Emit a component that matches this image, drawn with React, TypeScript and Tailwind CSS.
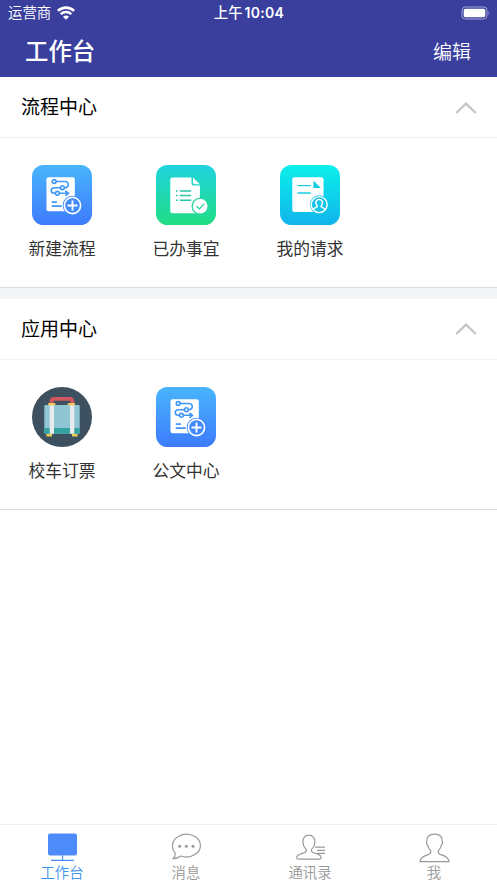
import type { ReactNode } from "react";

interface Entry {
  label: string;
  icon: ReactNode;
}

function FlowIcon({ id }: { id: string }) {
  return (
    <svg viewBox="0 0 60 60" className="size-[60px]" fill="none">
      <defs>
        <linearGradient id={id} x1="0" y1="0" x2="0" y2="1">
          <stop offset="0" stopColor="#49b5fd" />
          <stop offset="1" stopColor="#3d7bfc" />
        </linearGradient>
      </defs>
      <rect width="60" height="60" rx="11.5" fill={`url(#${id})`} />
      <rect x="14.5" y="12.2" width="28.3" height="34" rx="2" fill="#fff" />
      <g stroke="#3f97f8" strokeWidth="1.6">
        <path d="M24 16.5h8.5c5 0 5 6.2 0 6.2M28.4 22.7h-6c-4.2 0-4.2 5.6 0 5.6h1.2M27.3 28.3h8.4M33.3 25.8l3.2 2.5-3.2 2.5" />
        <circle cx="22.2" cy="16.5" r="1.9" />
        <circle cx="30.4" cy="22.7" r="1.9" />
        <circle cx="25.4" cy="28.3" r="1.9" />
        <path d="M19.7 37.2h5.2M19.7 41.2h10" strokeWidth="1.7" />
      </g>
      <circle cx="40.5" cy="40.5" r="9.8" fill="#408afc" />
      <circle cx="40.5" cy="40.5" r="8.1" stroke="#fff" strokeWidth="1.7" />
      <path d="M35.5 40.5h10M40.5 35.5v10" stroke="#fff" strokeWidth="1.9" />
    </svg>
  );
}

function DoneIcon() {
  return (
    <svg viewBox="0 0 60 60" className="size-[60px]" fill="none">
      <defs>
        <linearGradient id="done" x1="0" y1="0" x2="0" y2="1">
          <stop offset="0" stopColor="#20d3df" />
          <stop offset="1" stopColor="#20dd83" />
        </linearGradient>
      </defs>
      <rect width="60" height="60" rx="11.5" fill="url(#done)" />
      <path d="M16.3 12.4h19.2v6.1q0 2.1 2.1 2.1h6.3v25.6q0 2-2 2H16.3q-2 0-2-2V14.4q0-2 2-2Z" fill="#fff" />
      <path d="M37 12.6l6.8 6.6h-4.9q-1.9 0-1.9-1.9Z" fill="#fff" />
      <g stroke="#24c8a5" strokeWidth="1.5">
        <path d="M20 26h1.6M23.8 26h11.4M20 30.6h1.6M23.8 30.6h11.4M20 35.3h1.6M23.8 35.3h11.4" />
      </g>
      <circle cx="44.2" cy="41.2" r="8" fill="#fff" stroke="#25d6a0" strokeWidth="1.3" />
      <path d="M40.5 41.2l2.9 2.7 4.8-5" stroke="#24cf9a" strokeWidth="1.2" />
    </svg>
  );
}

function RequestIcon() {
  return (
    <svg viewBox="0 0 60 60" className="size-[60px]" fill="none">
      <defs>
        <linearGradient id="request" x1="0" y1="0" x2="0" y2="1">
          <stop offset="0" stopColor="#0bf0eb" />
          <stop offset="1" stopColor="#11b4eb" />
        </linearGradient>
      </defs>
      <rect width="60" height="60" rx="11.5" fill="url(#request)" />
      <rect x="12.3" y="12.3" width="31.2" height="34.7" rx="2" fill="#fff" />
      <path d="M33.4 15.5v7.6h7.5Z" fill="#13cce4" />
      <path d="M17.5 20.6h13.3M17.5 28h13.3" stroke="#17cfe5" strokeWidth="1.4" />
      <circle cx="39.2" cy="39.6" r="9.3" fill="#17c3e6" />
      <circle cx="39.2" cy="39.6" r="8" stroke="#fff" strokeWidth="1.4" />
      <path
        d="M33.5 44.6c.2-1.6 2.9-1.9 3.7-2.9.4-.7-.1-1.2-.7-2-1.3-2-.7-5.1 2.7-5.1s4 3.1 2.7 5.1c-.6.8-1.1 1.3-.7 2 .8 1 3.5 1.3 3.7 2.9"
        stroke="#fff"
        strokeWidth="1.5"
      />
    </svg>
  );
}

function LuggageIcon() {
  return (
    <svg viewBox="0 0 60 60" className="size-[60px]" fill="none">
      <circle cx="30" cy="30" r="30" fill="#3d505f" />
      <path d="M19.5 17v-2.5q0-2.6 2.6-2.6h15.6q2.6 0 2.6 2.6V17" stroke="#d25660" strokeWidth="3.8" />
      <rect x="12.3" y="18" width="35.4" height="28.7" rx="1" fill="#90c5d4" />
      <path d="M12.3 41h35.4v4.7q0 1-1 1H13.3q-1 0-1-1Z" fill="#36a1a1" />
      <path d="M17.7 17.5H22v29.2h-4.3ZM38 17.5h4.3v29.2H38Z" fill="#e8eaec" />
      <path d="M16.2 16h7.2v2.2h-7.2ZM35.7 16h7.2v2.2h-7.2Z" fill="#f3c458" />
      <path d="M14.4 46.9H20v2.6h-5.6ZM40 46.9h5.6v2.6H40Z" fill="#efcf58" />
    </svg>
  );
}

function Section({ title, entries }: { title: string; entries: Entry[] }) {
  return (
    <section className="h-[211px] border-b border-[#dcdcdf] bg-white">
      <div className="flex h-[61px] items-center justify-between border-b border-[#f1f1f2] pr-5 pl-[21px]">
        <h2 className="pb-[3px] text-[19px] leading-none text-black">{title}</h2>
        <svg viewBox="0 0 22 12" className="mt-px h-3 w-[22px]" fill="none">
          <path d="M1.2 11L11 1.6 20.8 11" stroke="#c5c5c7" strokeWidth="2.3" />
        </svg>
      </div>
      <div className="grid grid-cols-[repeat(4,124px)] pt-[27px]">
        {entries.map((entry) => (
          <div key={entry.label} className="flex flex-col items-center">
            {entry.icon}
            <span className="mt-[11px] text-[16.8px] leading-6 text-[#333]">{entry.label}</span>
          </div>
        ))}
      </div>
    </section>
  );
}

const flowEntries: Entry[] = [
  { label: "新建流程", icon: <FlowIcon id="flow-new" /> },
  { label: "已办事宜", icon: <DoneIcon /> },
  { label: "我的请求", icon: <RequestIcon /> },
];

const appEntries: Entry[] = [
  { label: "校车订票", icon: <LuggageIcon /> },
  { label: "公文中心", icon: <FlowIcon id="flow-doc" /> },
];

const tabs = [
  {
    label: "工作台",
    active: true,
    icon: (
      <>
        <rect x="1" y="0.5" width="29" height="22" rx="2" fill="#4e8bfa" />
        <path d="M15.5 22.5v4.7M4 27.3h23" stroke="#4e8bfa" strokeWidth="1.2" />
      </>
    ),
  },
  {
    label: "消息",
    icon: (
      <>
        <path d="M4.2 20.2C-.4 14.7.8 7 7.3 3.5c5-2.9 11.5-2.8 16.5.1 7.2 4.2 7.5 12.9.8 17.5-4.2 3-9.9 3.6-15 1.9-2 1.6-4.4 2.6-7.4 2.7 1.5-1.6 2.2-3.3 2-5.5Z" />
        <g fill="#999" stroke="none">
          <circle cx="8.6" cy="13.3" r="1.5" />
          <circle cx="15.3" cy="13.3" r="1.5" />
          <circle cx="22" cy="13.3" r="1.5" />
        </g>
      </>
    ),
  },
  {
    label: "通讯录",
    icon: (
      <path d="M13.9 2.2c-4 0-6.1 3-6 6.7.1 3 1.2 5.4 2.9 7 .9 1 .7 2.6-.5 3.3C7.6 20.7 1.7 21.4 1.7 24.4c0 1.2.5 1.8 1.8 1.8h20.8c1.3 0 1.8-.6 1.8-1.8 0-3-5.9-3.7-8.6-5.2-1.2-.7-1.4-2.3-.5-3.3 1.7-1.6 2.8-4 2.9-7 .1-3.7-2-6.7-6-6.7ZM20 14.2h10M22 17.3h8M22 20.4h8" />
    ),
  },
  {
    label: "我",
    icon: (
      <path d="M15.5 1.2c-5.2 0-8.2 2.5-7.6 7.2-.8 1.1-.3 3.1.7 3.8.5 2.3 1.4 3.9 2.8 5 .8 1.8.2 3.2-1.4 4C6.8 22.7 1.3 23 1 28.7h29c-.3-5.7-5.8-6-9-7.5-1.6-.8-2.2-2.2-1.4-4 1.4-1.1 2.3-2.7 2.8-5 1-.7 1.5-2.7.7-3.8.6-4.7-2.4-7.2-7.6-7.2Z" />
    ),
  },
];

export default function App() {
  return (
    <div className="flex h-[883px] w-[497px] flex-col overflow-hidden bg-white font-['Noto_Sans_CJK_SC',sans-serif]">
      <header className="h-[77px] bg-[#3a3f9d] text-white">
        <div className="grid h-[25px] grid-cols-3 items-center pr-[7px] pl-2 text-[14.4px] leading-none">
          <div className="flex items-center gap-1.5">
            <span className="font-[350]">运营商</span>
            <svg viewBox="0 0 18 14" className="h-3.5 w-[18px]" fill="none" stroke="#fff" strokeWidth="2.6">
              <path d="M.9 4.9C5.4.5 12.6.5 17.1 4.9M3.7 8.1c3-2.8 7.6-2.8 10.6 0" />
              <path d="M6 10.7c1.7-1.5 4.3-1.5 6 0L9 13.7Z" fill="#fff" stroke="none" />
            </svg>
          </div>
          <div className="text-center font-medium whitespace-nowrap">
            上午<span className="ml-0.5 font-['Inter'] text-[14px] font-semibold tracking-[0.3px]">10:04</span>
          </div>
          <svg viewBox="0 0 29 14" className="h-3.5 w-[29px] justify-self-end" fill="none">
            <rect x="1" y="1" width="25" height="12" rx="3.4" stroke="#a4a6d3" />
            <rect x="2.7" y="2.7" width="21.6" height="8.6" rx="1.8" fill="#fff" />
            <path d="M27.5 5q1.6 2 0 4Z" fill="#a4a6d3" />
          </svg>
        </div>
        <div className="flex h-[51px] items-center justify-between pr-[26px] pl-[25px]">
          <h1 className="text-[23.4px] leading-none font-medium">工作台</h1>
          <button className="text-[19px] leading-none font-[350]">编辑</button>
        </div>
      </header>

      <main className="flex flex-1 flex-col">
        <Section title="流程中心" entries={flowEntries} />
        <div className="h-[10.5px] bg-[#f3f4f8]" />
        <Section title="应用中心" entries={appEntries} />
      </main>

      <nav className="grid h-[59px] grid-cols-[repeat(4,124px)] border-t border-[#efeff0] pt-2">
        {tabs.map((tab) => (
          <div key={tab.label} className="flex flex-col items-center">
            <svg viewBox="0 0 31 30" className="h-[30px] w-[31px]" fill="none" stroke={tab.active ? "none" : "#999"} strokeWidth="1.2">
              {tab.icon}
            </svg>
            <span
              className={
                tab.active
                  ? "-mt-px text-[14.4px] leading-[19px] font-[350] text-[#3e96ed]"
                  : "-mt-px text-[14.4px] leading-[19px] font-[350] text-[#999]"
              }
            >
              {tab.label}
            </span>
          </div>
        ))}
      </nav>
    </div>
  );
}
